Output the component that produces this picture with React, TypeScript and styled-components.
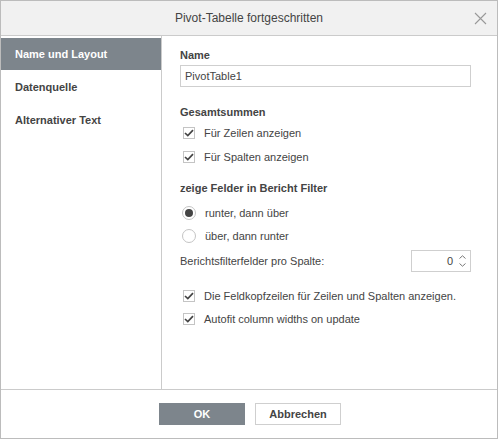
import styled, { createGlobalStyle } from 'styled-components'

const Global = createGlobalStyle`
  html, body {
    margin: 0;
    padding: 0;
    background: #fff;
  }
  body {
    font-family: Arial, "Liberation Sans", Helvetica, sans-serif;
    font-size: 11px;
    color: #444;
  }
`

const Dialog = styled.div`
  width: 498px;
  height: 439px;
  box-sizing: border-box;
  border: 1px solid #bcbcbc;
  display: flex;
  flex-direction: column;
  background: #fff;
`

const Header = styled.div`
  position: relative;
  height: 34px;
  flex: none;
  background: #f1f1f1;
  border-bottom: 1px solid #cbcbcb;
  display: flex;
  align-items: center;
  justify-content: center;
  font-size: 12px;
  color: #444;
`

const Close = styled.div`
  position: absolute;
  right: 10px;
  top: 11px;
  width: 13px;
  height: 13px;
`

const Body = styled.div`
  flex: 1;
  display: flex;
  min-height: 0;
`

const Sidebar = styled.div`
  width: 160px;
  flex: none;
  border-right: 1px solid #cbcbcb;
  padding-top: 2px;
`

const NavItem = styled.div<{ $active?: boolean }>`
  height: 32px;
  margin-bottom: 1px;
  display: flex;
  align-items: center;
  padding-left: 14px;
  font-weight: bold;
  color: ${(p) => (p.$active ? '#fff' : '#444')};
  background: ${(p) => (p.$active ? '#7d858c' : 'transparent')};
`

const Content = styled.div`
  flex: 1;
  padding: 12px 26px 0 18px;
`

const Heading = styled.div<{ $top?: number }>`
  font-weight: bold;
  margin-top: ${(p) => p.$top ?? 0}px;
  height: 14px;
  line-height: 14px;
`

const TextInput = styled.div`
  margin-top: 3px;
  height: 22px;
  box-sizing: border-box;
  border: 1px solid #cfcfcf;
  padding: 0 4px;
  display: flex;
  align-items: center;
`

const Row = styled.label<{ $top?: number }>`
  display: flex;
  align-items: center;
  height: 16px;
  margin-top: ${(p) => p.$top ?? 0}px;
  padding-left: 3px;
`

const Box = styled.span`
  width: 12px;
  height: 12px;
  box-sizing: border-box;
  border: 1px solid #c4c4c4;
  display: flex;
  align-items: center;
  justify-content: center;
  margin-right: 9px;
  flex: none;
`

const Radio = styled.span<{ $on?: boolean }>`
  width: 14px;
  height: 14px;
  box-sizing: border-box;
  border-radius: 50%;
  border: 1px solid #c4c4c4;
  display: flex;
  align-items: center;
  justify-content: center;
  margin-right: 9px;
  margin-left: -1px;
  flex: none;
  &::after {
    content: '';
    display: ${(p) => (p.$on ? 'block' : 'none')};
    width: 8px;
    height: 8px;
    border-radius: 50%;
    background: #444;
  }
`

const SpinRow = styled.div`
  display: flex;
  align-items: center;
  justify-content: space-between;
  margin-top: 6px;
  height: 22px;
`

const Spinner = styled.div`
  width: 60px;
  height: 22px;
  box-sizing: border-box;
  border: 1px solid #cfcfcf;
  display: flex;
  align-items: center;
  justify-content: flex-end;
  padding-right: 4px;
  gap: 6px;
`

const Arrows = styled.div`
  display: flex;
  flex-direction: column;
  gap: 4px;
`

const Footer = styled.div`
  height: 48px;
  flex: none;
  border-top: 1px solid #cbcbcb;
  display: flex;
  align-items: center;
  justify-content: center;
  gap: 10px;
  padding-left: 2px;
`

const Button = styled.div<{ $primary?: boolean }>`
  width: 86px;
  height: 22px;
  box-sizing: border-box;
  display: flex;
  align-items: center;
  justify-content: center;
  font-weight: bold;
  color: ${(p) => (p.$primary ? '#fff' : '#444')};
  background: ${(p) => (p.$primary ? '#7d858c' : '#fff')};
  border: 1px solid ${(p) => (p.$primary ? '#7d858c' : '#cfcfcf')};
`

const Check = () => (
  <svg width="10" height="8" viewBox="0 0 10 8">
    <path d="M1 4 L3.8 6.6 L9 1.2" fill="none" stroke="#444" strokeWidth="1.7" />
  </svg>
)

const CheckRow = ({ label, top }: { label: string; top?: number }) => (
  <Row $top={top}>
    <Box>
      <Check />
    </Box>
    {label}
  </Row>
)

export default function App() {
  return (
    <>
      <Global />
      <Dialog>
        <Header>
          Pivot-Tabelle fortgeschritten
          <Close>
            <svg width="13" height="13" viewBox="0 0 13 13">
              <path d="M1 1 L12 12 M12 1 L1 12" stroke="#999" strokeWidth="1.1" />
            </svg>
          </Close>
        </Header>
        <Body>
          <Sidebar>
            <NavItem $active>Name und Layout</NavItem>
            <NavItem>Datenquelle</NavItem>
            <NavItem>Alternativer Text</NavItem>
          </Sidebar>
          <Content>
            <Heading>Name</Heading>
            <TextInput>PivotTable1</TextInput>
            <Heading $top={18}>Gesamtsummen</Heading>
            <CheckRow top={6} label="Für Zeilen anzeigen" />
            <CheckRow top={8} label="Für Spalten anzeigen" />
            <Heading $top={16}>zeige Felder in Bericht Filter</Heading>
            <Row $top={10}>
              <Radio $on />
              runter, dann über
            </Row>
            <Row $top={7}>
              <Radio />
              über, dann runter
            </Row>
            <SpinRow>
              <span>Berichtsfilterfelder pro Spalte:</span>
              <Spinner>
                <span>0</span>
                <Arrows>
                  <svg width="7" height="4" viewBox="0 0 7 4">
                    <path d="M0.5 3.5 L3.5 0.8 L6.5 3.5" fill="none" stroke="#777" strokeWidth="1" />
                  </svg>
                  <svg width="7" height="4" viewBox="0 0 7 4">
                    <path d="M0.5 0.5 L3.5 3.2 L6.5 0.5" fill="none" stroke="#777" strokeWidth="1" />
                  </svg>
                </Arrows>
              </Spinner>
            </SpinRow>
            <CheckRow top={16} label="Die Feldkopfzeilen für Zeilen und Spalten anzeigen." />
            <CheckRow top={7} label="Autofit column widths on update" />
          </Content>
        </Body>
        <Footer>
          <Button $primary>OK</Button>
          <Button>Abbrechen</Button>
        </Footer>
      </Dialog>
    </>
  )
}
